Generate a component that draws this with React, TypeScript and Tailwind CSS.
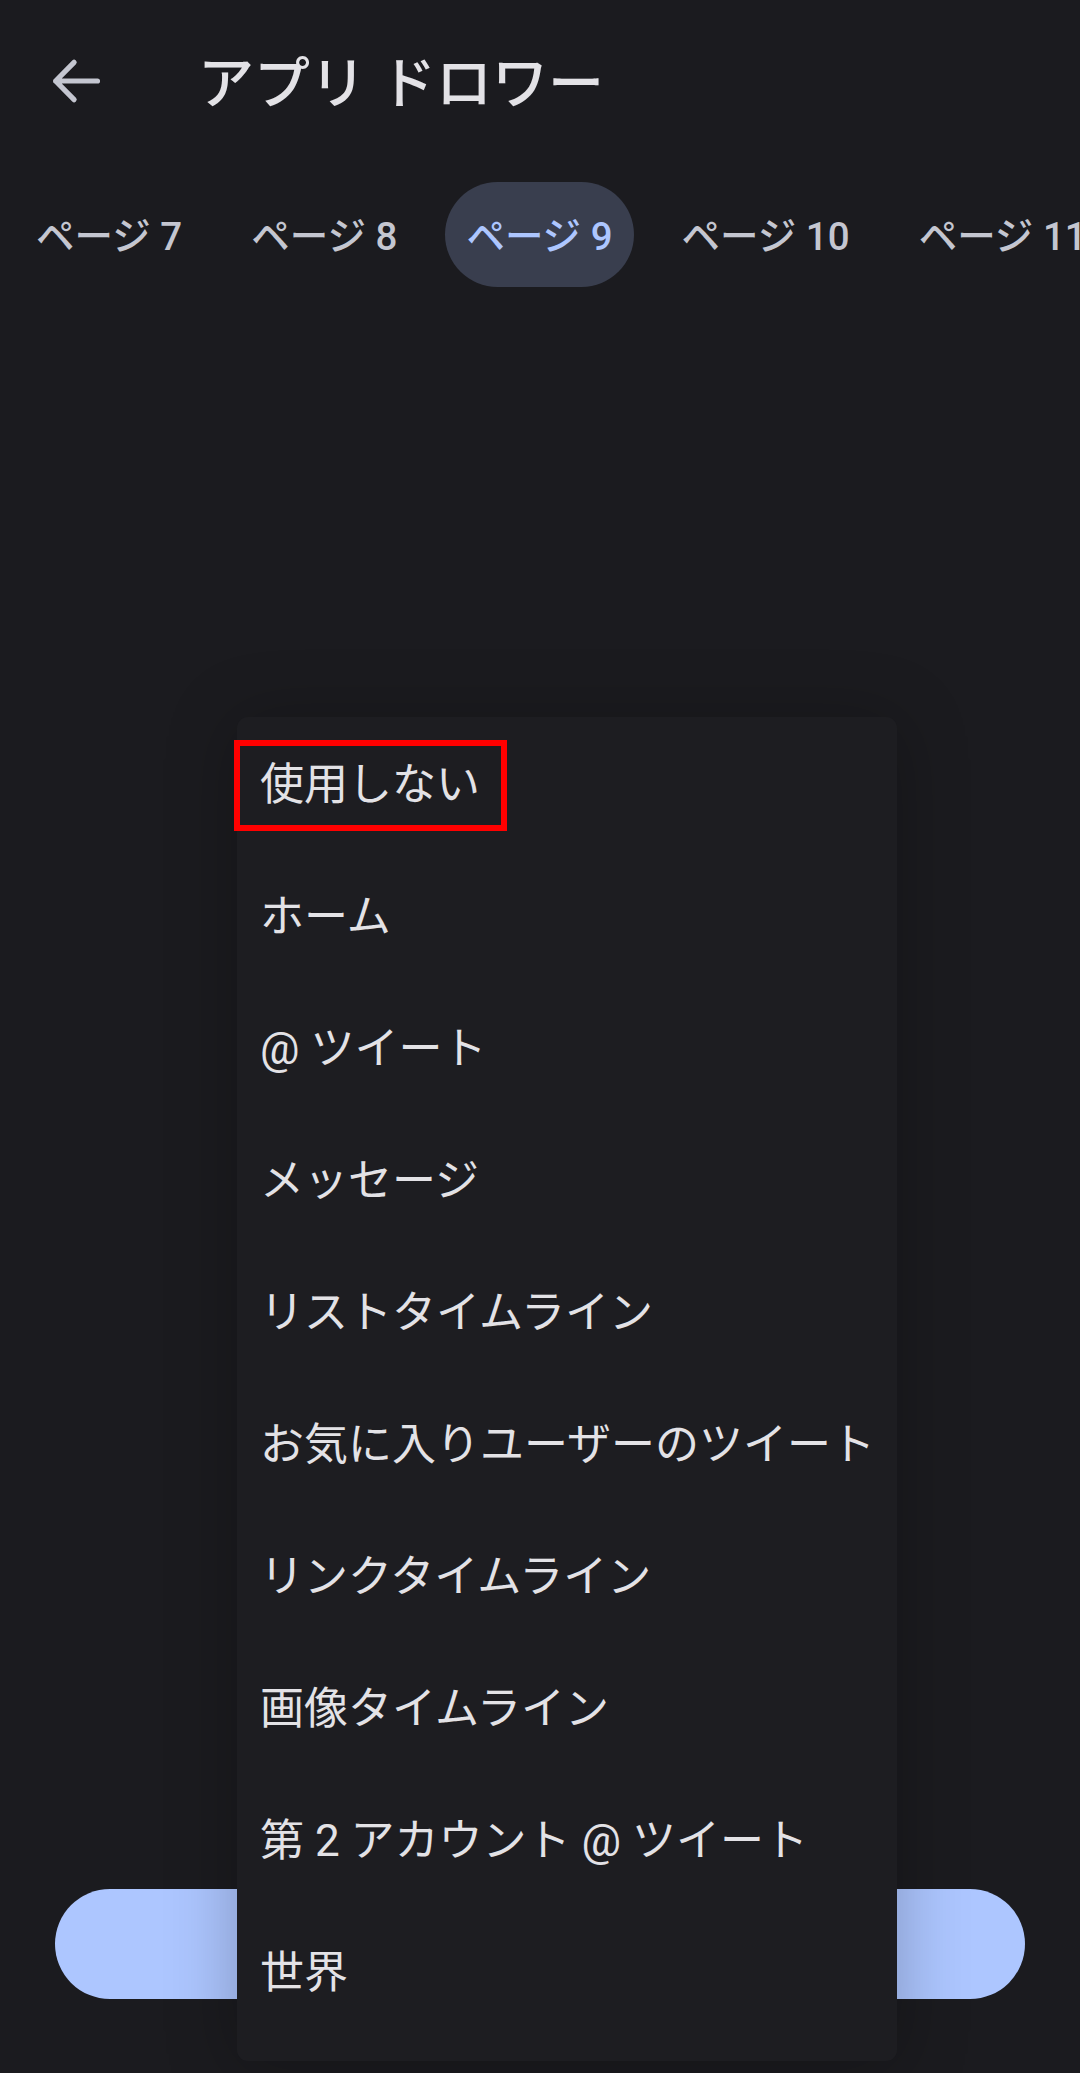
import React from "react";

const FONT = { fontFamily: 'Roboto, "Noto Sans CJK JP", sans-serif' };

const tabs = ["ページ 7", "ページ 8", "ページ 9", "ページ 10", "ページ 11"];
const items = [
  "使用しない",
  "ホーム",
  "@ ツイート",
  "メッセージ",
  "リストタイムライン",
  "お気に入りユーザーのツイート",
  "リンクタイムライン",
  "画像タイムライン",
  "第 2 アカウント @ ツイート",
  "世界",
];

export default function App() {
  return (
    <div
      className="relative w-[1080px] h-[2073px] overflow-hidden bg-[#1b1b1f] flex flex-col"
      style={FONT}
    >
      {/* Top app bar */}
      <div className="h-[162px] flex items-center shrink-0">
        <div className="w-[66px] h-[66px] ml-[43px] flex items-center justify-center">
          <svg width="66" height="66" viewBox="0 0 24 24" fill="none">
            <path
              d="M19.8 12H4.6M11.3 5.2L4.6 12l6.7 6.8"
              stroke="#c4c6d0"
              strokeWidth="1.9"
              strokeLinecap="round"
              strokeLinejoin="round"
            />
          </svg>
        </div>
        <div className="ml-[89px] text-[56px] leading-none text-[#e3e2e6] font-medium whitespace-nowrap pt-[6px]">
          アプリ ドロワー
        </div>
      </div>

      {/* Tabs */}
      <div className="mt-[20px] h-[105px] flex items-center gap-[27px] pl-[15px] whitespace-nowrap shrink-0">
        {tabs.map((t, i) => (
          <div
            key={t}
            className={
              i === 2
                ? "h-[105px] px-[21px] rounded-full bg-[#393e4e] flex items-center text-[38.5px] leading-none font-medium text-[#adc6ff] shrink-0 pt-[6px]"
                : "h-[105px] px-[21px] rounded-full flex items-center text-[38.5px] leading-none font-medium text-[#c4c6d0] shrink-0 pt-[6px]"
            }
          >
            {t}
          </div>
        ))}
      </div>

      <div className="flex-1" />

      {/* Bottom button */}
      <div className="mx-[55px] mb-[74px] h-[110px] rounded-full bg-[#adc6ff] flex items-center justify-center text-[38.5px] font-medium text-[#102f60] shrink-0">
        保存
      </div>

      {/* Dropdown menu */}
      <div className="absolute left-[237px] top-[717px] w-[660px] pt-[2px] pb-[22px] bg-[#1d1d21] rounded-[11px] shadow-[0_6px_70px_rgba(0,0,0,0.26)]">
        {items.map((it) => (
          <div
            key={it}
            className="h-[132px] flex items-center pl-[23px] text-[44px] leading-none text-[#e3e2e6] whitespace-nowrap"
          >
            {it}
          </div>
        ))}
        {/* annotation highlight */}
        <div className="absolute left-[-3px] top-[23px] w-[273px] h-[91px] border-[6px] border-[#ff0000]" />
      </div>
    </div>
  );
}
